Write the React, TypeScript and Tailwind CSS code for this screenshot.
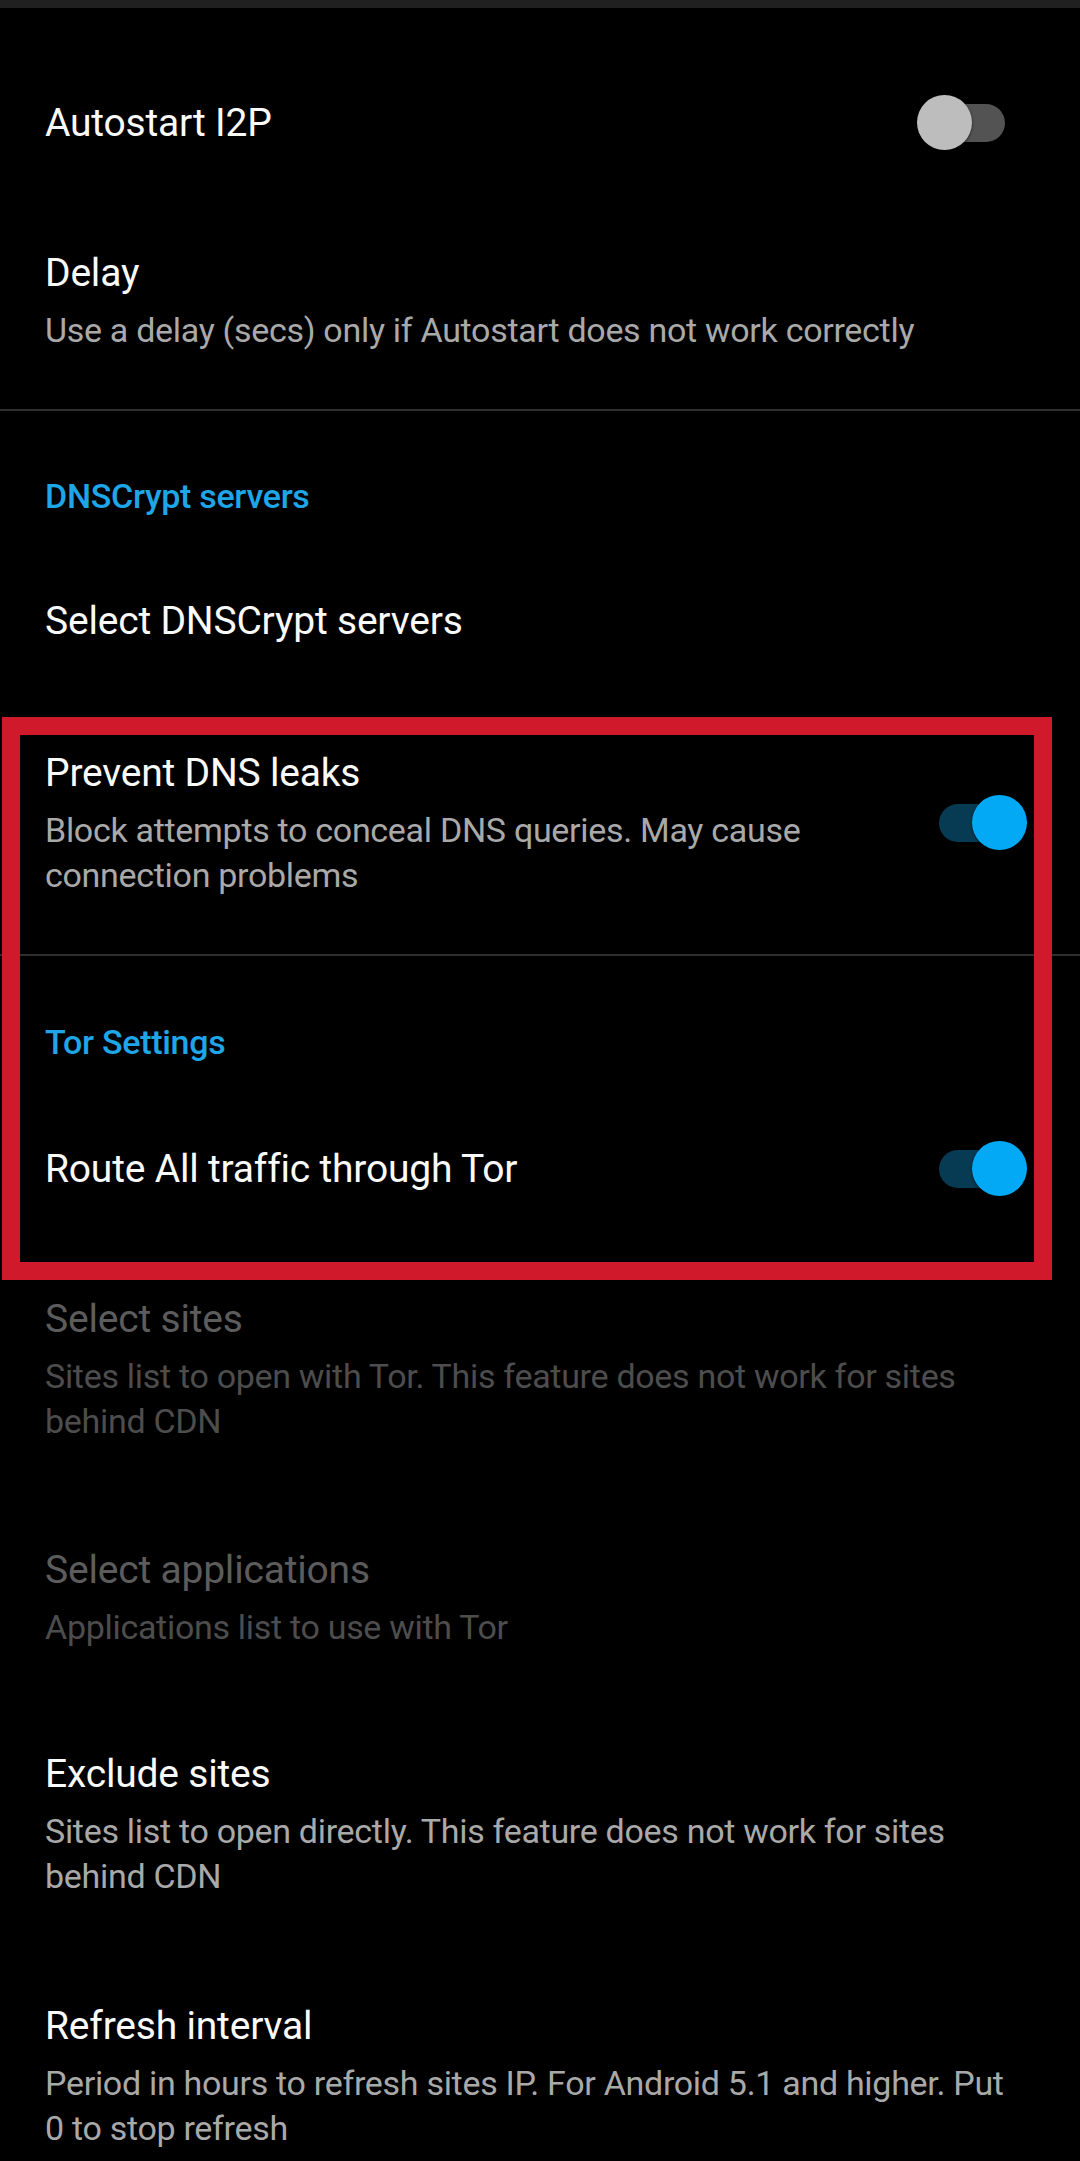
import React from "react";

function Toggle({ on }: { on: boolean }) {
  return (
    <div className="relative w-[110px] h-[55px] shrink-0">
      <div
        className={
          on
            ? "absolute left-[22px] top-[9px] w-[66px] h-[38px] rounded-full bg-[#073b54]"
            : "absolute left-[22px] top-[9px] w-[66px] h-[38px] rounded-full bg-[#535353]"
        }
      />
      <div
        className={
          on
            ? "absolute left-[55px] top-0 w-[55px] h-[55px] rounded-full bg-[#03a9f4] shadow-[0_1px_3px_rgba(0,0,0,0.6)]"
            : "absolute left-0 top-0 w-[55px] h-[55px] rounded-full bg-[#bdbdbd] shadow-[0_1px_3px_rgba(0,0,0,0.6)]"
        }
      />
    </div>
  );
}

type RowProps = {
  title: string;
  lines?: string[];
  toggle?: boolean | null;
  disabled?: boolean;
  pt: string;
  pb: string;
};

function Row({ title, lines = [], toggle = null, disabled = false, pt, pb }: RowProps) {
  return (
    <div className={`flex items-center pl-[45px] pr-[53px] ${pt} ${pb}`}>
      <div className="flex-1 min-w-0 flex flex-col">
        <div
          className={
            disabled
              ? "text-[39px] leading-[52px] tracking-[-0.2px] text-[#5c5c5c] whitespace-nowrap"
              : "text-[39px] leading-[52px] tracking-[-0.2px] text-[#fafafa] whitespace-nowrap"
          }
        >
          {title}
        </div>
        {lines.length > 0 && (
          <div className="mt-[9px] flex flex-col">
            {lines.map((l, i) => (
              <div
                key={i}
                className={
                  disabled
                    ? "text-[34px] leading-[45px] tracking-[-0.3px] text-[#4d4d4d] whitespace-nowrap"
                    : "text-[34px] leading-[45px] tracking-[-0.3px] text-[#a9a9a9] whitespace-nowrap"
                }
              >
                {l}
              </div>
            ))}
          </div>
        )}
      </div>
      {toggle !== null && <Toggle on={toggle} />}
    </div>
  );
}

function Header({ text, pt }: { text: string; pt: string }) {
  return (
    <div className={`pl-[45px] ${pt}`}>
      <div className="text-[34px] leading-[46px] font-medium tracking-[-0.3px] text-[#1ea6e8] whitespace-nowrap">
        {text}
      </div>
    </div>
  );
}

export default function App() {
  return (
    <div
      className="relative w-[1080px] h-[2161px] overflow-hidden bg-black"
      style={{ fontFamily: "Roboto, 'Liberation Sans', sans-serif" }}
    >
      <div className="h-[8px] bg-[#202020]" />

      <Row title="Autostart I2P" toggle={false} pt="pt-[87px]" pb="pb-[49px]" />
      <Row
        title="Delay"
        lines={["Use a delay (secs) only if Autostart does not work correctly"]}
        pt="pt-[48px]"
        pb="pb-[51px]"
      />
      <div className="mt-[5px] h-[2px] bg-[#2e2e2e]" />

      <Header text="DNSCrypt servers" pt="pt-[62px]" />
      <Row title="Select DNSCrypt servers" pt="pt-[76px]" pb="pb-[48px]" />
      <Row
        title="Prevent DNS leaks"
        lines={["Block attempts to conceal DNS queries. May cause", "connection problems"]}
        toggle={true}
        pt="pt-[52px]"
        pb="pb-[56px]"
      />
      <div className="h-[2px] bg-[#2e2e2e]" />

      <Header text="Tor Settings" pt="pt-[63px]" />
      <Row title="Route All traffic through Tor" toggle={true} pt="pt-[76px]" pb="pb-[48px]" />
      <Row
        title="Select sites"
        lines={["Sites list to open with Tor. This feature does not work for sites", "behind CDN"]}
        disabled
        pt="pt-[49px]"
        pb="pb-[51px]"
      />
      <Row
        title="Select applications"
        lines={["Applications list to use with Tor"]}
        disabled
        pt="pt-[49px]"
        pb="pb-[49px]"
      />
      <Row
        title="Exclude sites"
        lines={["Sites list to open directly. This feature does not work for sites", "behind CDN"]}
        pt="pt-[49px]"
        pb="pb-[52px]"
      />
      <Row
        title="Refresh interval"
        lines={["Period in hours to refresh sites IP. For Android 5.1 and higher. Put", "0 to stop refresh"]}
        pt="pt-[49px]"
        pb="pb-[48px]"
      />

      <div className="absolute left-[2px] top-[717px] w-[1050px] h-[563px] border-[18px] border-[#d0192a] pointer-events-none" />
    </div>
  );
}
